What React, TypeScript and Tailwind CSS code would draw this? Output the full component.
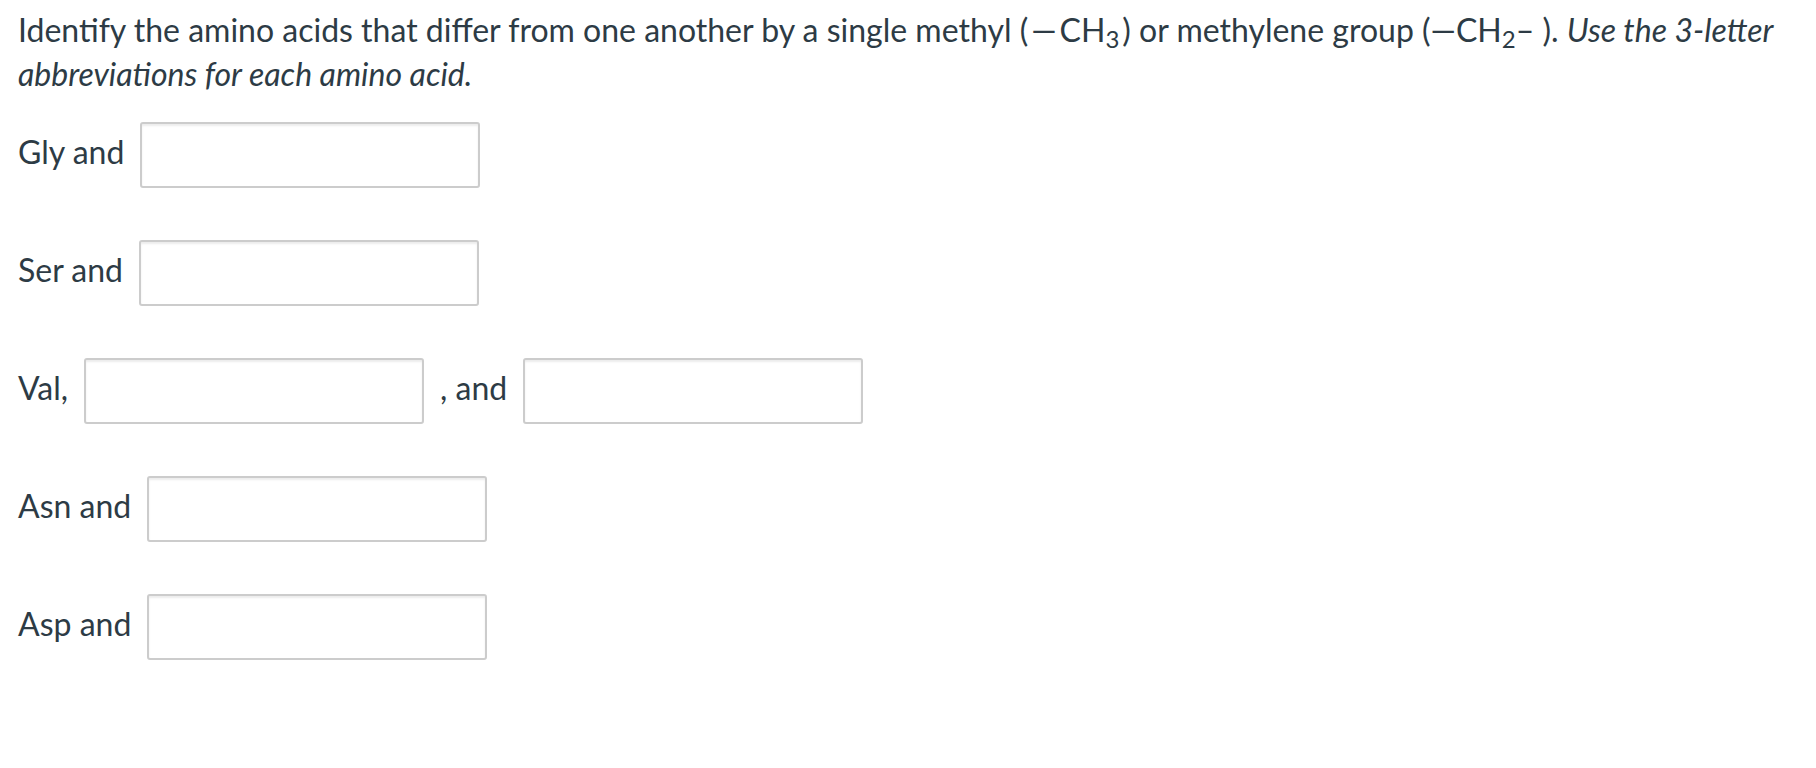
import React from 'react';

const font = { fontFamily: 'Lato, "Noto Sans", sans-serif' };

function Blank() {
  return (
    <input
      type="text"
      className="h-[66px] w-[340px] rounded-[3px] border-2 border-[#cccccc] bg-white shadow-[inset_0_2px_2px_rgba(0,0,0,0.075)] outline-none"
    />
  );
}

function Row({ children }: { children: React.ReactNode }) {
  return <div className="flex items-center gap-4">{children}</div>;
}

function Label({ children }: { children: React.ReactNode }) {
  return <span className="mb-[6px]">{children}</span>;
}

export default function App() {
  return (
    <div className="min-h-screen bg-white pl-[18px] pr-[20px] pt-[8px] text-[32px] leading-[44px] text-[#2d3b45]" style={font}>
      <p className="mb-[26px]">
        Identify the amino acids that differ from one another by a single methyl (<span className="mx-[3px]">—</span>CH<sub>3</sub>
        <span className="ml-[3px]">)</span> or methylene group (—CH<sub>2</sub>– ).{' '}
        <em>Use the 3-letter abbreviations for each amino acid.</em>
      </p>

      <div className="flex flex-col gap-[52px]">
        <Row>
          <Label>Gly and</Label>
          <Blank />
        </Row>
        <Row>
          <Label>Ser and</Label>
          <Blank />
        </Row>
        <Row>
          <Label>Val,</Label>
          <Blank />
          <Label>, and</Label>
          <Blank />
        </Row>
        <Row>
          <Label>Asn and</Label>
          <Blank />
        </Row>
        <Row>
          <Label>Asp and</Label>
          <Blank />
        </Row>
      </div>
    </div>
  );
}
